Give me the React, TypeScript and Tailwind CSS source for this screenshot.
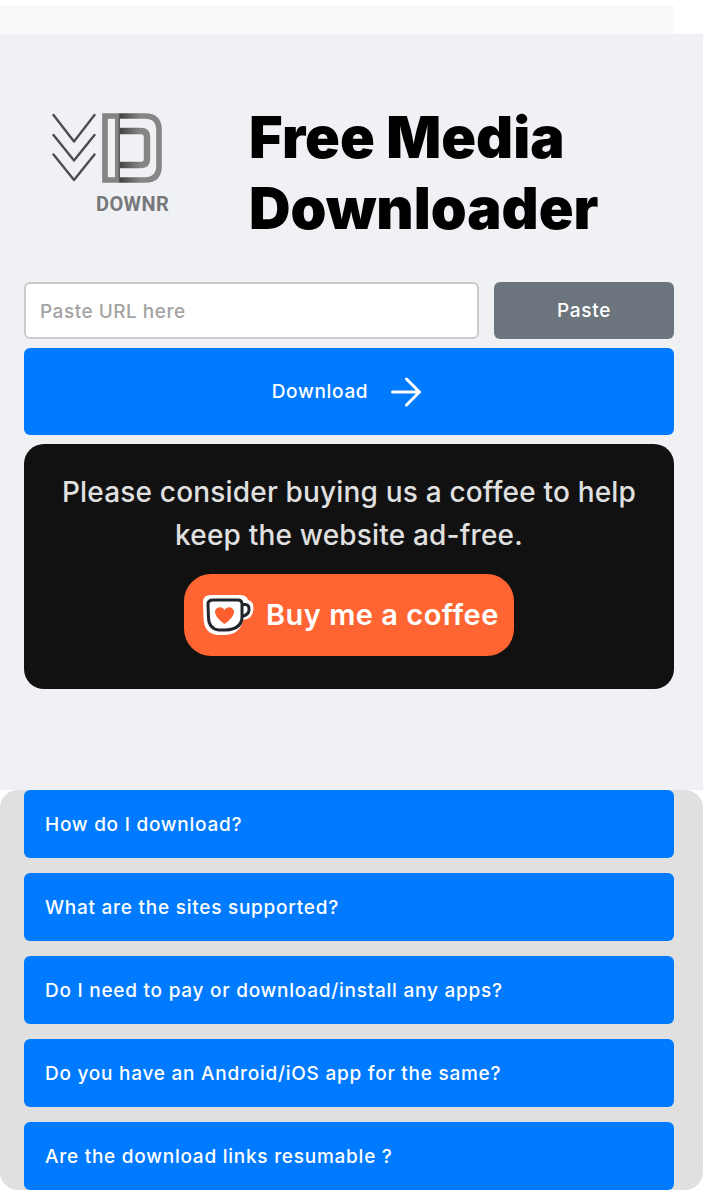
const faqs = [
  "How do I download?",
  "What are the sites supported?",
  "Do I need to pay or download/install any apps?",
  "Do you have an Android/iOS app for the same?",
  "Are the download links resumable ?",
];

const Logo = () => (
  <div className="w-[225px] shrink-0 pl-[28px] pt-[11px]">
    <svg width="112" height="72" viewBox="0 0 112 72" fill="none">
      <defs>
        <linearGradient id="fade" gradientUnits="userSpaceOnUse" x1="50" x2="88" y1="0" y2="0">
          <stop offset="0" stopColor="#858585" />
          <stop offset="0.42" stopColor="#858585" />
          <stop offset="0.48" stopColor="#454545" />
          <stop offset="1" stopColor="#868686" />
        </linearGradient>
      </defs>
      {/* chevrons */}
      <g stroke="#4d4d4f" strokeWidth="2.4" strokeLinecap="round" strokeLinejoin="round">
        <path d="M1.500 2L22 28.500L42.500 2" />
        <path d="M1.500 22L22 47.500L42.500 22" />
        <path d="M1.500 41.500L22 67L42.500 41.500" />
      </g>
      {/* outer D */}
      <path d="M53 3H93Q107 3 107 17V53Q107 67 93 67H53Z" stroke="url(#fade)" strokeWidth="5.700" />
      <rect x="63" y="3" width="5" height="64" fill="url(#fade)" />
      {/* inner D */}
      <path d="M67 18H89Q95 18 95 24V46Q95 52 89 52H67" stroke="url(#fade)" strokeWidth="6.400" />
    </svg>
    <div className="mt-[8px] ml-[44px] text-[20px] leading-[22px] font-bold tracking-[0.4px] text-[#77787a] font-['Roboto',sans-serif]">
      DOWNR
    </div>
  </div>
);

const KofiCup = () => (
  <svg width="52" height="42" viewBox="0 0 52 42" className="shrink-0">
    <path
      d="M9 1H37Q45 1 46 6Q52 7 51.500 15Q51 25 41 26Q38 41 22 41H16Q2 40 1.500 24L1 8Q1 1 9 1Z"
      fill="#fff"
    />
    <path
      d="M11 6H36Q40 6 40 10V24Q39 35 24 36H17Q7 35 6.500 24L6 10Q6 6 11 6Z"
      fill="#fff"
      stroke="#22252b"
      strokeWidth="3"
    />
    <path
      d="M40 10.500H43.500Q47.500 11 47 16Q46.500 21.500 40 22"
      fill="none"
      stroke="#22252b"
      strokeWidth="3"
    />
    <path
      d="M22.500 30Q12.500 23 13 17.500C13.500 12.500 20 11.500 22.500 16C25 11.500 31.500 12.500 32 17.500Q32.500 23 22.500 30Z"
      fill="#ff5f2e"
    />
  </svg>
);

const App = () => {
  return (
    <div className="w-[708px] h-[1200px] overflow-hidden bg-white pt-[5px] font-['Inter',sans-serif]">
      <div className="h-[29px] w-[674px] bg-[#f9f9f9]" />

      <section className="h-[756px] w-[703px] bg-[#f0f1f5] px-6 pt-[68px]">
        <div className="flex h-[180px] items-start">
          <Logo />
          <h1 className="text-[57.500px] leading-[71px] font-black text-black">
            Free Media
            <br />
            Downloader
          </h1>
        </div>

        <div className="flex w-[650px] flex-col gap-[9px] text-[19px] tracking-[0.7px]">
          <div className="flex gap-[15px]">
            <input
              placeholder="Paste URL here"
              className="h-[57px] w-[455px] rounded-md border-2 border-[#cccccc] bg-white px-[14px] pt-[2px] font-medium tracking-[0.5px] placeholder:text-[#a3a3a3]"
            />
            <button className="h-[57px] w-[180px] rounded-md bg-[#6c757d] pt-[2px] font-medium text-white">
              Paste
            </button>
          </div>

          <button className="flex h-[87px] items-center justify-center gap-[23px] rounded-md bg-[#007bff] pr-[5px] font-medium text-white">
            <span className="pt-[2px]">Download</span>
            <svg width="30" height="30" viewBox="0 0 30 30" fill="none" stroke="currentColor" strokeWidth="3" strokeLinecap="round" strokeLinejoin="round">
              <path d="M1.500 15H28.500M15.500 2L28.500 15L15.500 28" />
            </svg>
          </button>

          <div className="flex h-[245px] flex-col items-center rounded-[20px] bg-[#111111] pt-[27px] tracking-normal">
            <p className="w-[600px] text-center text-[28px] leading-[43px] font-medium tracking-[0.18px] text-[#e0e0e0]">
              Please consider buying us a coffee to help keep the website ad-free.
            </p>
            <a className="mt-[17px] flex h-[82px] w-[330px] items-center gap-[12px] rounded-[27px] bg-[#ff6433] pl-[18px] text-[29px] font-semibold tracking-[0.5px] text-white">
              <KofiCup />
              Buy me a coffee
            </a>
          </div>
        </div>
      </section>

      <section className="flex h-[400px] w-[703px] flex-col gap-[15px] rounded-[18px] bg-[#e0e0e0] px-6">
        {faqs.map((q) => (
          <button
            key={q}
            className="flex h-[68px] w-[650px] shrink-0 items-center rounded-md bg-[#007bff] pl-[21px] pt-[2px] text-[19px] font-medium tracking-[0.75px] text-white"
          >
            {q}
          </button>
        ))}
      </section>
    </div>
  );
};

export default App;
